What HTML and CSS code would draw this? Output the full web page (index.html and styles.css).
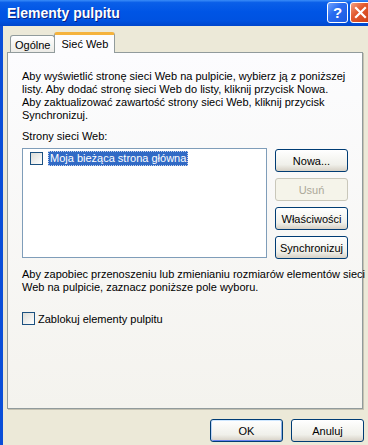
FILE: index.html
```html
<!DOCTYPE html>
<html lang="pl">
<head>
  <meta charset="UTF-8" />
  <title>Elementy pulpitu</title>
  <link rel="stylesheet" href="styles.css">
</head>
<body>
  <div class="window">
    <div class="titlebar">
      <span class="title">Elementy pulpitu</span>
      <div class="caption-buttons">
        <span class="cap-btn help">?</span>
        <span class="cap-btn close">
          <svg width="13" height="13" viewBox="0 0 13 13"><path d="M2 2 L11 11 M11 2 L2 11" stroke="#fff" stroke-width="2.2" stroke-linecap="square"/></svg>
        </span>
      </div>
    </div>
    <div class="frame">
      <div class="tabs">
        <span class="tab">Ogólne</span>
        <span class="tab active">Sieć Web</span>
      </div>
      <div class="panel">
        <p class="intro">Aby wyświetlić stronę sieci Web na pulpicie, wybierz ją z poniższej<br>listy. Aby dodać stronę sieci Web do listy, kliknij przycisk Nowa.<br>Aby zaktualizować zawartość strony sieci Web, kliknij przycisk<br>Synchronizuj.</p>
        <div class="label">Strony sieci Web:</div>
        <div class="list-row">
          <div class="listbox">
            <div class="list-item">
              <span class="check"></span>
              <span class="item-text">Moja bieżąca strona główna</span>
            </div>
          </div>
          <div class="side-buttons">
            <button>Nowa...</button>
            <button disabled>Usuń</button>
            <button>Właściwości</button>
            <button>Synchronizuj</button>
          </div>
        </div>
        <p class="note">Aby zapobiec przenoszeniu lub zmienianiu rozmiarów elementów sieci<br>Web na pulpicie, zaznacz poniższe pole wyboru.</p>
        <label class="lock"><span class="check"></span>Zablokuj elementy pulpitu</label>
      </div>
      <div class="footer">
        <button class="default">OK</button>
        <button>Anuluj</button>
      </div>
    </div>
  </div>
</body>
</html>
```

FILE: styles.css
```css
body {
  margin: 0;
  padding: 0;
  font-family: "Liberation Sans", Arial, sans-serif;
  font-size: 11px;
  color: #000;
  background: #ece9d8;
}
.window {
  width: 368px;
  height: 445px;
  overflow: hidden;
  background: #ece9d8;
}
.titlebar {
  height: 26px;
  display: flex;
  align-items: flex-start;
  justify-content: space-between;
  background: linear-gradient(to bottom, #3a8cf8 0%, #0a5fe8 10%, #0055e5 45%, #0052e0 80%, #0046cc 100%);
  color: white;
}
.title {
  font-family: "Liberation Sans", Arial, sans-serif;
  font-weight: bold;
  font-size: 14px;
  padding: 5px 0 0 7px;
  text-shadow: 1px 1px 0 #0a1f80;
}
.caption-buttons {
  display: flex;
  gap: 2px;
  margin: 2px -3px 0 0;
}
.cap-btn {
  width: 21px;
  height: 21px;
  box-sizing: border-box;
  border: 1px solid #fff;
  border-radius: 3px;
  display: flex;
  align-items: center;
  justify-content: center;
  color: white;
}
.help {
  background: linear-gradient(to bottom right, #6fa3ff, #2a6cf0 40%, #1d5ae0);
  font-weight: bold;
  font-size: 15px;
}
.close {
  background: linear-gradient(to bottom right, #f2a184, #e25a2f 40%, #cf3d14);
}
.frame {
  border-left: 3px solid #0a4ed8;
  height: 419px;
  padding: 6px 4px 0 4px;
}
/* zakładki */
.tabs {
  display: flex;
  align-items: flex-end;
  padding-left: 3px;
  height: 20px;
}
.tab {
  height: 17px;
  box-sizing: border-box;
  padding: 3px 4px 0 4px;
  border: 1px solid #919b9c;
  border-bottom: none;
  border-radius: 3px 3px 0 0;
  background: linear-gradient(to bottom, #fff, #ecebe6);
}
.tab.active {
  position: relative;
  z-index: 1;
  height: 21px;
  margin-bottom: -1px;
  margin-left: -1px;
  padding: 3px 6px 0 6px;
  border-top: 3px solid #f5b33d;
  background: #fcfcfe;
}
.panel {
  height: 357px;
  box-sizing: border-box;
  margin-right: 1px;
  padding: 17px 14px 0 14px;
  border: 1px solid #919b9c;
  box-shadow: 1px 1px 0 #c5c2b2;
  background: linear-gradient(to bottom, #fcfcfe, #f4f3ee);
}
.panel p {
  margin: 0;
  line-height: 13px;
  white-space: nowrap;
}
.label {
  margin-top: 8px;
  line-height: 13px;
}
.list-row {
  display: flex;
  margin-top: 5px;
}
.listbox {
  width: 245px;
  height: 110px;
  box-sizing: border-box;
  border: 1px solid #7f9db9;
  background: white;
  padding: 2px 7px;
}
.list-item {
  display: flex;
  align-items: center;
}
.check {
  width: 13px;
  height: 13px;
  box-sizing: border-box;
  border: 1px solid #1c5180;
  background: linear-gradient(to bottom right, #dcdcd7, #fff);
  flex-shrink: 0;
}
.item-text {
  margin-left: 5px;
  padding: 0 1px;
  line-height: 13px;
  border: 1px dotted #c9d6ee;
  background: #316ac5;
  color: white;
}
.side-buttons {
  display: flex;
  flex-direction: column;
  gap: 6px;
  margin: 1px 0 0 8px;
}
button {
  width: 73px;
  height: 23px;
  padding: 0;
  font-family: "Liberation Sans", Arial, sans-serif;
  font-size: 11px;
  color: #000;
  border: 1px solid #003c74;
  border-radius: 3px;
  background: linear-gradient(to bottom, #fff, #f0f0ea 70%, #d6d0c5);
}
button:disabled {
  color: #aca899;
  border-color: #c9c7ba;
  background: #f5f4ea;
}
button.default {
  box-shadow: inset 0 1px 0 #cee7ff, inset 1px 0 0 #bcd4f6, inset -1px 0 0 #89ade4, inset 0 -1px 0 #6982ee;
}
.note {
  margin-top: 9px !important;
}
.lock {
  display: flex;
  align-items: center;
  gap: 3px;
  margin-top: 18px;
}
.footer {
  display: flex;
  justify-content: flex-end;
  gap: 8px;
  padding-top: 10px;
}
```
